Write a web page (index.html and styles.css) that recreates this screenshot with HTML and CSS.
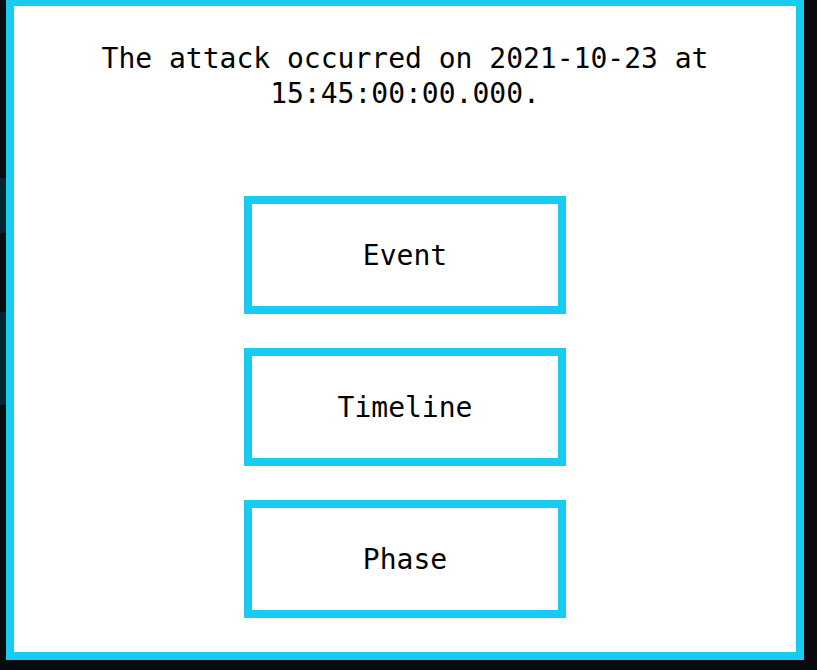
FILE: index.html
```html
<!DOCTYPE html>
<html lang="en">
<head>
<meta charset="utf-8">
<title>Attack</title>
<link rel="stylesheet" href="styles.css">
</head>
<body>
<main class="panel">
  <p class="message">The attack occurred on 2021-10-23 at 15:45:00:00.000.</p>
  <div class="choices">
    <button class="choice" type="button">Event</button>
    <button class="choice" type="button">Timeline</button>
    <button class="choice" type="button">Phase</button>
  </div>
</main>
</body>
</html>
```
FILE: styles.css
```css
html, body {
  margin: 0;
  padding: 0;
  height: 100%;
}
body {
  background-color: #0a0b0f;
  background-image: linear-gradient(to bottom,
    #0a0b0f 0, #0a0b0f 178px,
    #03252c 178px, #03252c 233px,
    #0a0b0f 233px, #0a0b0f 312px,
    #03252c 312px, #03252c 405px,
    #0a0b0f 405px);
  background-size: 6px 100%;
  background-repeat: no-repeat;
  font-family: "DejaVu Sans Mono", "Liberation Mono", monospace;
  color: #000;
  overflow: hidden;
}
.panel {
  box-sizing: border-box;
  width: 798px;
  height: 662px;
  margin: -2px 0 0 6px;
  border: 8px solid #17cbf1;
  background: #fff;
  display: flex;
  flex-direction: column;
  align-items: center;
}
.message {
  margin: 0;
  padding-top: 35px;
  font-size: 28px;
  line-height: 35px;
  text-align: center;
  width: 100%;
}
.choices {
  margin-top: 85px;
  display: flex;
  flex-direction: column;
  gap: 34px;
}
.choice {
  box-sizing: border-box;
  width: 322px;
  height: 118px;
  border: 8px solid #17cbf1;
  background: #fff;
  font-family: "DejaVu Sans Mono", "Liberation Mono", monospace;
  font-size: 28px;
  color: #000;
  padding: 0;
  cursor: pointer;
}
```
